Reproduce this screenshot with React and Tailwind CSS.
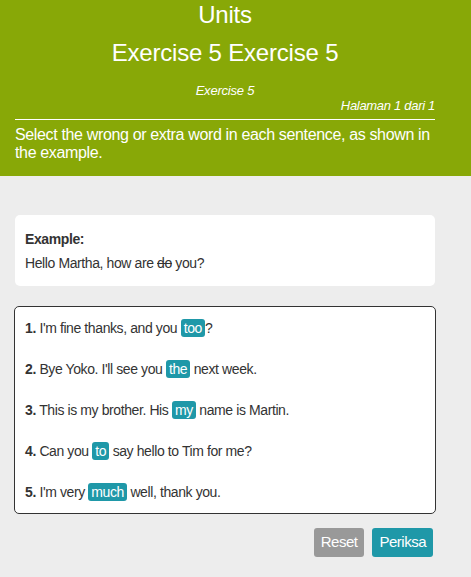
import React from 'react';

const questions = [
  { n: 1, before: "I'm fine thanks, and you", word: 'too', after: '?', tight: true },
  { n: 2, before: "Bye Yoko. I'll see you", word: 'the', after: 'next week.' },
  { n: 3, before: 'This is my brother. His', word: 'my', after: 'name is Martin.' },
  { n: 4, before: 'Can you', word: 'to', after: 'say hello to Tim for me?' },
  { n: 5, before: "I'm very", word: 'much', after: 'well, thank you.' },
];

export default function App() {
  return (
    <div className="min-h-[577px] bg-[#ededed] text-[#333] font-['Liberation_Sans',Arial,sans-serif]">
      {/* Header */}
      <div className="bg-[#88a807] text-white pl-[15px] pr-[36px] h-[176px]">
        <div className="text-center text-[24px] leading-[29px] tracking-[-0.2px]">Units</div>
        <div className="text-center text-[24px] leading-[29px] mt-[9px] tracking-[-0.2px]">Exercise 5 Exercise 5</div>
        <div className="text-center text-[13px] italic leading-[16px] mt-[16px] tracking-[-0.2px]">Exercise 5</div>
        <div className="text-right text-[13px] italic leading-[16px] -mt-[1px] tracking-[-0.3px]">Halaman 1 dari 1</div>
        <div className="border-t border-white mt-[5px]"></div>
        <div className="text-[16px] leading-[18px] mt-[6px] tracking-[-0.35px]">
          Select the wrong or extra word in each sentence, as shown in the example.
        </div>
      </div>

      <div className="px-[15px] pt-[39px]">
        {/* Example */}
        <div className="w-[420px] bg-white rounded-[5px] px-[10px] pt-[16px] pb-[15px] text-[14px] tracking-[-0.4px]">
          <div className="font-bold leading-[16px]">Example:</div>
          <div className="leading-[16px] mt-[8px]">
            Hello Martha, how are <span className="line-through">do</span> you?
          </div>
        </div>

        {/* Questions */}
        <div className="w-[422px] -ml-px mt-[20px] bg-white border border-[#333] rounded-[5px] px-[10px] pt-[13px] pb-[13px] text-[14px] tracking-[-0.4px] flex flex-col gap-[25px]">
          {questions.map(q => (
            <div key={q.n} className="leading-[16px]">
              <span className="font-bold">{q.n}.</span> {q.before}{' '}
              <span className="bg-[#1f98a8] text-white rounded-[3px] px-[3px] py-[1px]">{q.word}</span>
              {q.tight ? q.after : ' ' + q.after}
            </div>
          ))}
        </div>

        {/* Buttons */}
        <div className="w-[420px] flex justify-end gap-[8px] mt-[14px] pr-[2px]">
          <button className="h-[29px] px-[7px] rounded-[3px] bg-[#999999] text-white text-[15px] tracking-[-0.5px]">Reset</button>
          <button className="h-[29px] px-[7px] rounded-[3px] bg-[#1f98a8] text-white text-[15px] tracking-[-0.5px]">Periksa</button>
        </div>
      </div>
    </div>
  );
}
